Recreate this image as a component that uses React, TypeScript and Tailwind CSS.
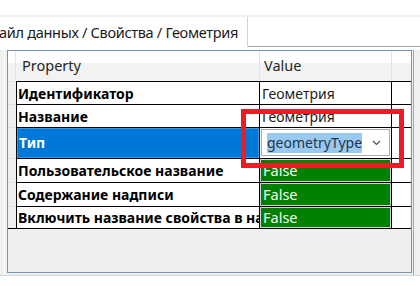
export default function App() {
  const rows = [
    { name: "Идентификатор", kind: "text", value: "Геометрия", h: "h-[23px]" },
    { name: "Название", kind: "text", value: "Геометрия", h: "h-[23px]" },
    { name: "Тип", kind: "combo", value: "geometryType", h: "h-[31px]" },
    { name: "Пользовательское название", kind: "bool", value: "False", h: "h-[24px]" },
    { name: "Содержание надписи", kind: "bool", value: "False", h: "h-[24px]" },
    { name: "Включить название свойства в названии", kind: "bool", value: "False", h: "h-[23px]" },
  ];

  return (
    <div className="relative w-[420px] h-[286px] overflow-hidden bg-white font-['Noto_Sans',sans-serif]">
      <div className="h-[15px]" />
      <div className="h-[2px] bg-[#f0f0f0]" />
      {/* tab strip */}
      <div className="flex h-[30px]">
        <div className="flex w-[248px] items-center justify-end overflow-hidden border-r border-[#d4d4d4] bg-white pr-[9px]">
          <span className="whitespace-nowrap text-[14.5px] leading-none tracking-[-0.3px] text-[#1a1a1a]">
            Файл данных / Свойства / Геометрия
          </span>
        </div>
        <div className="flex-1 border-b border-[#a6a6a6]" />
      </div>
      <div className="h-[3px]" />
      {/* panel area */}
      <div className="flex h-[226px] border-b border-[#d6d6d6] bg-[#f0f0f0]">
        <div className="w-[4px]" />
        <div className="w-[1px] bg-[#fbfbfb]" />
        <div className="w-[2px]" />
        <div className="flex h-[223px] w-[405px] flex-col border border-[#7494c0] bg-[#efefef]">
          {/* header */}
          <div className="flex h-[30px] bg-[linear-gradient(#ffffff_0%,#ffffff_38%,#f2f2f2_42%,#f2f2f2_100%)]">
            <div className="w-[8px] border-r border-[#e4e4e4]" />
            <div className="flex w-[244px] items-center border-r border-[#e2e2e2] pl-[6px] text-[14.5px] text-[#262626]">
              Property
            </div>
            <div className="flex w-[132px] items-center border-r border-[#e2e2e2] pl-[4px] text-[14.5px] text-[#262626]">
              Value
            </div>
            <div className="w-[19px]" />
          </div>
          {/* rows */}
          {rows.map((r, i) => (
            <div
              key={i}
              className={`flex ${r.h} ${i === rows.length - 1 ? "border-b" : ""} border-black`}
            >
              <div className="w-[8px] border-t border-[#e2e2e2]" />
              <div className="flex w-[395px] border-t border-black">
                <div
                  className={`w-[244px] overflow-hidden border-l border-r border-black ${
                    r.kind === "combo" ? "" : "flex items-center bg-white"
                  }`}
                >
                  {r.kind === "combo" ? (
                    <div className="h-full border border-[#3d97e4] bg-[#0078d7] pl-[1px] pt-[1px]">
                      <span className="whitespace-nowrap text-[14px] font-bold leading-[21px] text-white">
                        {r.name}
                      </span>
                    </div>
                  ) : (
                    <span className="whitespace-nowrap pl-[1px] text-[14px] font-bold text-black">
                      {r.name}
                    </span>
                  )}
                </div>
                <div className="w-[132px] overflow-hidden border-r border-black bg-white">
                  {r.kind === "text" && (
                    <div className="flex h-full items-center pl-[2px] text-[14px] text-[#1c1c1c]">
                      {r.value}
                    </div>
                  )}
                  {r.kind === "combo" && (
                    <div className="pl-[1px] pr-[1px] pt-[1px]">
                      <div className="flex h-[27px] items-center border border-[#a9a9a9] bg-white pl-[5px] pr-[8px]">
                        <span className="bg-[#99c9ef] text-[14px] leading-[20px] text-[#1f3550]">
                          {r.value}
                        </span>
                        <div className="flex-1" />
                        <svg width="9" height="6" viewBox="0 0 9 6">
                          <polyline points="1,1 4.5,4.5 8,1" fill="none" stroke="#505050" strokeWidth="1.2" />
                        </svg>
                      </div>
                    </div>
                  )}
                  {r.kind === "bool" && (
                    <div className="flex h-full items-center border border-[#d2d2d2] bg-[#008000] pl-[2px] text-[14.5px] text-[#f4fff4]">
                      {r.value}
                    </div>
                  )}
                </div>
                <div className="w-[18px] bg-white" />
              </div>
            </div>
          ))}
        </div>
        <div className="w-[1px]" />
        <div className="w-[1px] bg-[#94a9c9]" />
        <div className="flex-1" />
      </div>
      {/* red highlight */}
      <div className="absolute left-[241px] top-[109px] h-[59px] w-[163px] border-[5px] border-[#ec1c24]" />
    </div>
  );
}
